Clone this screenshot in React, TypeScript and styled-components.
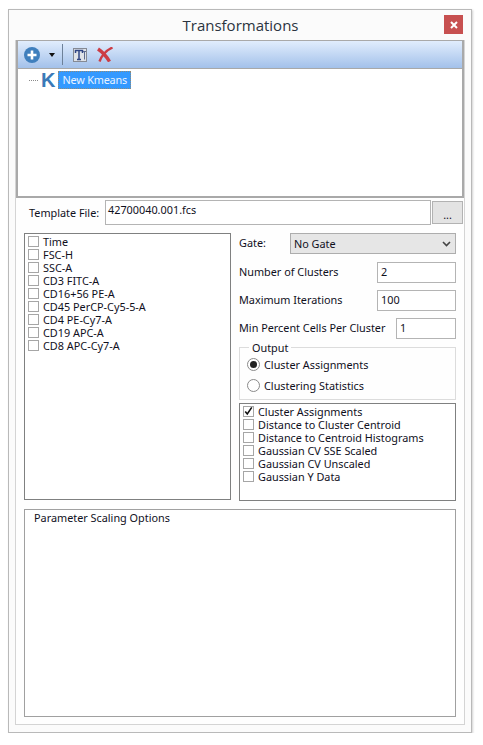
import React from "react"
import styled, { createGlobalStyle } from "styled-components"

const GlobalStyle = createGlobalStyle`
	html, body {
		margin: 0;
		background: #ffffff;
	}

	* {
		box-sizing: border-box;
	}
`

const Window = styled.div`
	display: flex;
	flex-direction: column;
	width: 464px;
	height: 724px;
	margin: 9px 0 0 8px;
	background: #fbfbfb;
	border: 1px solid #b9b9b9;
	box-shadow: 1px 1px 2px rgba(0, 0, 0, 0.18);
	font-family: "Noto Sans", sans-serif;
	font-size: 10.85px;
	line-height: 13px;
	color: #10101c;
`

const TitleBar = styled.div`
	display: flex;
	flex: none;
	align-items: flex-start;
	height: 30px;
	padding: 5px 8px 0 28px;
`

const Title = styled.div`
	flex: 1;
	text-align: center;
	font-family: "Open Sans", sans-serif;
	font-size: 15px;
	line-height: 21px;
	color: #2b3440;
`

const CloseButton = styled.div`
	display: flex;
	flex: none;
	align-items: center;
	justify-content: center;
	width: 19px;
	height: 19px;
	background: #c75050;
`

const Body = styled.div`
	display: flex;
	flex: 1;
	flex-direction: column;
	margin: 0 6px 7px 6px;
	border: 1px solid #d4d4d4;
	border-top: none;
	background: #fefefe;
`

const TreePanel = styled.div`
	flex: none;
	height: 158px;
	border: 2px solid #a9a9a9;
	border-width: 1px 2px 2px 2px;
	background: #ffffff;
`

const Toolbar = styled.div`
	display: flex;
	align-items: center;
	height: 28px;
	padding-left: 6px;
	background: linear-gradient(#e1edfd, #a3c1ea);
	border-bottom: 1px solid #a8a8a8;
`

const Separator = styled.div`
	width: 1px;
	height: 21px;
	margin: 0 10px 0 7px;
	background: #6d8199;
`

const ToolGap = styled.span`
	width: 10px;
`

const TreeRow = styled.div`
	display: flex;
	align-items: center;
	height: 18px;
	margin-top: 2px;
	padding-left: 11px;
`

const TreeDots = styled.div`
	width: 9px;
	margin-right: 3px;
	border-top: 1px dotted #8a8a8a;
`

const KBadge = styled.span`
	width: 17px;
	font-family: "Liberation Sans", sans-serif;
	font-size: 20px;
	font-weight: 700;
	line-height: 18px;
	color: #3a7ab8;
`

const SelectedNode = styled.span`
	height: 18px;
	padding: 0 3.5px;
	line-height: 16px;
	letter-spacing: -0.2px;
	color: #e9f3ff;
	background: #3399ff;
	border: 1px dotted #8f8a78;
`

const TemplateRow = styled.div`
	display: flex;
	flex: none;
	align-items: flex-start;
	height: 35px;
	padding: 2px 0 0 13px;
`

const TemplateLabel = styled.span`
	width: 76px;
	margin-top: 6px;
`

const FileField = styled.div`
	width: 326px;
	height: 25px;
	padding: 1px 2px;
	line-height: 16px;
	background: #ffffff;
	border: 1px solid #b4b4b4;
`

const BrowseButton = styled.div`
	display: flex;
	align-items: flex-end;
	justify-content: center;
	width: 31px;
	height: 23px;
	margin: 1px 0 0 1px;
	padding-bottom: 3px;
	line-height: 11px;
	background: #e3e3e3;
	border: 1px solid #b2b2b2;
`

const Columns = styled.div`
	display: flex;
	flex: none;
	gap: 8px;
	height: 268px;
	padding: 0 8px;
`

const ListBox = styled.div<{ $height: number }>`
	display: flex;
	flex-direction: column;
	flex: none;
	height: ${(p) => p.$height}px;
	padding: 1px 3px;
	background: #ffffff;
	border: 1px solid #7f8080;
`

const ParamBox = styled(ListBox)`
	width: 207px;
`

const CheckRow = styled.div`
	display: flex;
	flex: none;
	align-items: center;
	gap: 4px;
	height: 13px;
	white-space: nowrap;
`

const CheckBox = styled.span`
	display: flex;
	flex: none;
	align-items: center;
	justify-content: center;
	width: 11px;
	height: 11px;
	background: #ffffff;
	border: 1px solid #a6a6a6;
`

const OptionColumn = styled.div`
	display: flex;
	flex-direction: column;
	width: 217px;
`

const FieldRow = styled.div`
	display: flex;
	flex: none;
	align-items: center;
	justify-content: space-between;
	height: 21px;
	margin-bottom: 7px;
	padding-bottom: 2px;
`

const GateRow = styled(FieldRow)`
	margin-bottom: 8px;
`

const GateSelect = styled.div`
	display: flex;
	flex: none;
	align-self: flex-start;
	align-items: center;
	justify-content: space-between;
	width: 166px;
	height: 21px;
	padding: 0 4px 0 3px;
	background: #e6e6e6;
	border: 1px solid #adadad;
`

const NumberField = styled.div<{ $width: number }>`
	flex: none;
	align-self: flex-start;
	width: ${(p) => p.$width}px;
	height: 21px;
	padding: 0 3px;
	line-height: 18px;
	background: #ffffff;
	border: 1px solid #b4b4b4;
`

const OutputGroup = styled.fieldset`
	display: flex;
	flex: none;
	flex-direction: column;
	height: 59px;
	margin: -5px 0 3px 0;
	padding: 0 0 0 7px;
	border: 1px solid #dcdcdc;
`

const OutputLegend = styled.legend`
	margin-left: 2px;
	padding: 0 3px;
	line-height: 13px;
`

const RadioRow = styled.div`
	display: flex;
	align-items: center;
	gap: 4px;
	height: 21px;
`

const Radio = styled.span<{ $on?: boolean }>`
	display: flex;
	flex: none;
	align-items: center;
	justify-content: center;
	width: 13px;
	height: 13px;
	border: 1px solid #8a8a8a;
	border-radius: 50%;
	background: #ffffff;

	&::after {
		content: "";
		display: ${(p) => (p.$on ? "block" : "none")};
		width: 7px;
		height: 7px;
		border-radius: 50%;
		background: #222222;
	}
`

const ScalingBox = styled.div`
	height: 208px;
	margin: 8px 8px 0 8px;
	padding: 1px 9px;
	background: #ffffff;
	border: 1px solid #a0a0a0;
`

const parameters = [
	"Time",
	"FSC-H",
	"SSC-A",
	"CD3 FITC-A",
	"CD16+56 PE-A",
	"CD45 PerCP-Cy5-5-A",
	"CD4 PE-Cy7-A",
	"CD19 APC-A",
	"CD8 APC-Cy7-A"
]

const outputs = [
	"Cluster Assignments",
	"Distance to Cluster Centroid",
	"Distance to Centroid Histograms",
	"Gaussian CV SSE Scaled",
	"Gaussian CV Unscaled",
	"Gaussian Y Data"
]

const AddIcon = () => (
	<svg width="16" height="16" viewBox="0 0 16 16">
		<circle cx="8" cy="8" r="8" fill="#3f7fbd" />
		<path d="M8 3.5v9M3.5 8h9" stroke="#ffffff" strokeWidth="2.6" />
	</svg>
)

const CaretIcon = () => (
	<svg width="6" height="4" viewBox="0 0 6 4" style={{ marginLeft: 9 }}>
		<path d="M0 0h6L3 4z" fill="#111111" />
	</svg>
)

const TemplateIcon = () => (
	<svg width="14" height="14" viewBox="0 0 14 14">
		<rect x="0.5" y="0.5" width="13" height="13" fill="#dfe3e8" stroke="#858a94" />
		<path d="M2.5 5V2.5h7V5M6 2.5v9M4 11.5h4" fill="none" stroke="#2f4584" strokeWidth="1.5" />
		<path d="M10 3.5h3M11.5 3.5v8" fill="none" stroke="#5d6c90" />
	</svg>
)

const DeleteIcon = () => (
	<svg width="16" height="15" viewBox="0 0 16 15">
		<path d="M1 2C5.5 5 9.5 9.5 12.5 14.5" fill="none" stroke="#cc3d45" strokeWidth="3.4" />
		<path d="M15.5 0.5C10 3 5 8 2.5 14.5" fill="none" stroke="#cc3d45" strokeWidth="2.4" />
	</svg>
)

const CheckMark = () => (
	<svg width="11" height="11" viewBox="0 0 11 11">
		<path d="M1.5 5.5L4 8.5L9.5 0.5" fill="none" stroke="#111111" strokeWidth="2" />
	</svg>
)

const App = () => (
	<>
		<GlobalStyle />
		<Window>
			<TitleBar>
				<Title>Transformations</Title>
				<CloseButton>
					<svg width="8" height="8" viewBox="0 0 8 8">
						<path d="M1 1l6 6M7 1L1 7" stroke="#ffffff" strokeWidth="2" />
					</svg>
				</CloseButton>
			</TitleBar>
			<Body>
				<TreePanel>
					<Toolbar>
						<AddIcon />
						<CaretIcon />
						<Separator />
						<TemplateIcon />
						<ToolGap />
						<DeleteIcon />
					</Toolbar>
					<TreeRow>
						<TreeDots />
						<KBadge>K</KBadge>
						<SelectedNode>New Kmeans</SelectedNode>
					</TreeRow>
				</TreePanel>
				<TemplateRow>
					<TemplateLabel>Template File:</TemplateLabel>
					<FileField>42700040.001.fcs</FileField>
					<BrowseButton>...</BrowseButton>
				</TemplateRow>
				<Columns>
					<ParamBox $height={267}>
						{parameters.map((name) => (
							<CheckRow key={name}>
								<CheckBox />
								{name}
							</CheckRow>
						))}
					</ParamBox>
					<OptionColumn>
						<GateRow>
							Gate:
							<GateSelect>
								No Gate
								<svg width="9" height="6" viewBox="0 0 9 6">
									<path d="M1 1l3.5 3.5L8 1" fill="none" stroke="#444444" strokeWidth="1.6" />
								</svg>
							</GateSelect>
						</GateRow>
						<FieldRow>
							Number of Clusters
							<NumberField $width={79}>2</NumberField>
						</FieldRow>
						<FieldRow>
							Maximum Iterations
							<NumberField $width={79}>100</NumberField>
						</FieldRow>
						<FieldRow>
							Min Percent Cells Per Cluster
							<NumberField $width={60}>1</NumberField>
						</FieldRow>
						<OutputGroup>
							<OutputLegend>Output</OutputLegend>
							<RadioRow>
								<Radio $on />
								Cluster Assignments
							</RadioRow>
							<RadioRow>
								<Radio />
								Clustering Statistics
							</RadioRow>
						</OutputGroup>
						<ListBox $height={98}>
							{outputs.map((name, i) => (
								<CheckRow key={name}>
									<CheckBox>{i === 0 && <CheckMark />}</CheckBox>
									{name}
								</CheckRow>
							))}
						</ListBox>
					</OptionColumn>
				</Columns>
				<ScalingBox>Parameter Scaling Options</ScalingBox>
			</Body>
		</Window>
	</>
)

export default App
